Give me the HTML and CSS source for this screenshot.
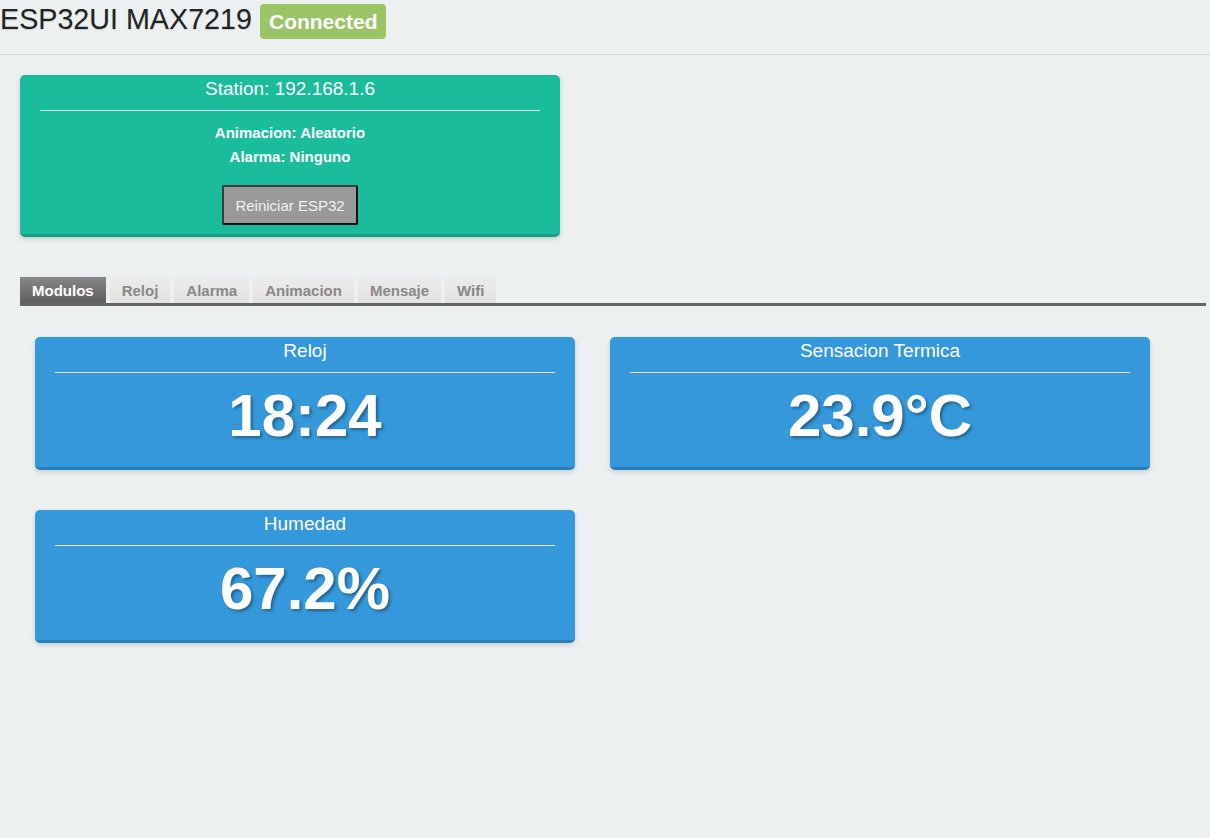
FILE: index.html
```html
<!DOCTYPE html>
<html lang="es">
<head>
<meta charset="utf-8">
<title>ESP32UI MAX7219</title>
<link rel="stylesheet" href="styles.css">
</head>
<body>
<header class="top">
  <h1 class="title">ESP32UI MAX7219</h1>
  <span class="badge">Connected</span>
</header>
<main class="main">
  <section class="card card-green">
    <div class="card-title">Station: 192.168.1.6</div>
    <div class="rule"></div>
    <div class="info">
      <p>Animacion: Aleatorio</p>
      <p>Alarma: Ninguno</p>
    </div>
    <div class="btn-row"><button class="btn" type="button">Reiniciar ESP32</button></div>
  </section>

  <nav class="tabs">
    <span class="tab active">Modulos</span>
    <span class="tab">Reloj</span>
    <span class="tab">Alarma</span>
    <span class="tab">Animacion</span>
    <span class="tab">Mensaje</span>
    <span class="tab">Wifi</span>
  </nav>

  <div class="grid">
    <section class="card card-blue">
      <div class="card-title">Reloj</div>
      <div class="rule"></div>
      <div class="value">18:24</div>
    </section>
    <section class="card card-blue">
      <div class="card-title">Sensacion Termica</div>
      <div class="rule"></div>
      <div class="value">23.9°C</div>
    </section>
    <section class="card card-blue">
      <div class="card-title">Humedad</div>
      <div class="rule"></div>
      <div class="value">67.2%</div>
    </section>
  </div>
</main>
</body>
</html>
```

FILE: styles.css
```css
html, body {
  margin: 0;
  padding: 0;
}
body {
  background: #ecf0f1;
  font-family: "Liberation Sans", Arial, sans-serif;
  color: #222;
  min-height: 838px;
}
.top {
  display: flex;
  align-items: flex-start;
  height: 54px;
  border-bottom: 1px solid #dcdcdc;
}
.title {
  margin: 3px 0 0 0;
  font-size: 28.7px;
  line-height: 32px;
  font-weight: normal;
  color: #222;
  text-shadow: 0 1px 1px rgba(0, 0, 0, 0.15);
}
.badge {
  margin: 4px 0 0 8px;
  height: 35px;
  line-height: 35px;
  padding: 0 9px;
  background: #9bc466;
  color: #fff;
  font-size: 21px;
  font-weight: bold;
  border-radius: 4px;
}
.main {
  padding: 20px 4px 0 20px;
}
.card {
  box-sizing: border-box;
  width: 540px;
  padding: 3px 20px 18px;
  border-radius: 5px;
  color: #fff;
  box-shadow: 0 2px 5px rgba(0, 0, 0, 0.15);
}
.card-green {
  background: #1abc9c;
  border-bottom: 3px solid #16a085;
  padding-bottom: 9px;
}
.card-blue {
  background: #3498db;
  border-bottom: 3px solid #2980b9;
}
.card-title {
  font-size: 19px;
  line-height: 22px;
  text-align: center;
}
.rule {
  border-top: 1px solid #e4e8ea;
  margin: 10px 0 9px;
}
.info {
  text-align: center;
  padding-top: 1px;
}
.info p {
  margin: 0;
  font-size: 15px;
  font-weight: bold;
  line-height: 24px;
}
.btn-row {
  text-align: center;
  margin-top: 16px;
}
.btn {
  font-family: "Liberation Sans", Arial, sans-serif;
  font-size: 15px;
  line-height: 17px;
  padding: 9px 11px;
  height: 40px;
  background: #999;
  color: #f2f2f2;
  border: 2px solid #3c3c3c;
  border-right-color: #111;
  border-bottom-color: #111;
  border-radius: 2px;
}
.tabs {
  display: flex;
  gap: 4px;
  margin-top: 40px;
  border-bottom: 3px solid #666;
}
.tab {
  padding: 5px 12px 3px;
  font-size: 15px;
  line-height: 18px;
  font-weight: bold;
  color: #888;
  background: linear-gradient(#ececec, #e2e2e2);
}
.tab.active {
  color: #fff;
  background: linear-gradient(#878787, #5f5f5f);
}
.grid {
  display: grid;
  grid-template-columns: repeat(2, 540px);
  column-gap: 35px;
  row-gap: 40px;
  padding: 31px 0 0 15px;
}
.value {
  font-size: 60px;
  line-height: 67px;
  font-weight: bold;
  text-align: center;
  text-shadow: 2px 2px 3px rgba(0, 0, 0, 0.35);
}
```
